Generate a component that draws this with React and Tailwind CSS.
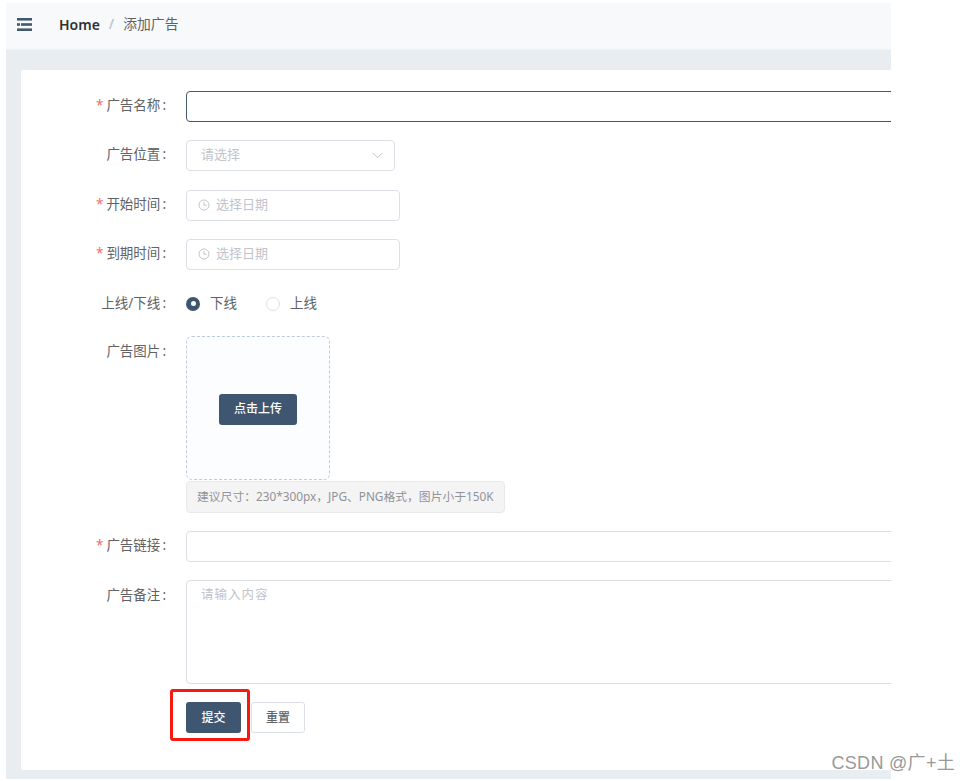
import React from "react";

const cjk = "font-['Noto_Sans','Noto_Sans_CJK_SC',sans-serif]";

function Label({ text, required, flat }) {
  return (
    <div
      className={`w-[146px] shrink-0 h-[31px] flex items-center justify-end pr-[1px] text-[13.5px] text-[#606266] ${flat ? "" : "pb-[2px]"}`}
    >
      {required && <span className="text-[#f56c6c] mr-[3px]">*</span>}
      <span>{text}</span>
      <span className="ml-[2px]">:</span>
    </div>
  );
}

function ClockIcon() {
  return (
    <svg width="12" height="12" viewBox="0 0 12 12" fill="none" stroke="#c0c4cc" strokeWidth="1">
      <circle cx="6" cy="6" r="5" />
      <path d="M6 3v3.2h2.6" />
    </svg>
  );
}

function DateInput() {
  return (
    <div className="w-[214px] h-[31px] border border-[#dcdfe6] rounded flex items-center pl-[11px] pb-[2px] gap-[6px] text-[13px] text-[#c0c4cc]">
      <ClockIcon />
      <span>选择日期</span>
    </div>
  );
}

function App() {
  return (
    <div className={`relative w-[971px] h-[781px] bg-white overflow-hidden ${cjk}`}>
      <div className="ml-[6px] pt-[3px] w-[885px] h-[779px] flex flex-col">
        {/* Top bar */}
        <div className="h-[47px] shrink-0 bg-[#f7f9fb] border-b border-[#eff2f5] flex items-center pl-[11px] pb-[3px]">
          <svg width="15" height="13" viewBox="0 0 15 13" fill="#44586e">
            <rect x="0" y="0" width="15" height="2.6" />
            <rect x="0" y="5.2" width="3" height="2.6" />
            <rect x="4" y="5.2" width="11" height="2.6" />
            <rect x="0" y="10.4" width="15" height="2.6" />
          </svg>
          <span className="ml-[27px] text-[14px] font-semibold text-[#303133]">Home</span>
          <span className="mx-[9px] text-[13.5px] text-[#c0c4cc] font-semibold">/</span>
          <span className="text-[13.8px] text-[#606266]">添加广告</span>
        </div>

        {/* Page body */}
        <div className="flex-1 bg-[#e8edf1] pt-[20px] pl-[15px] pb-[9px] overflow-hidden">
          <div className="h-full bg-white rounded-tl-[3px] rounded-bl-[3px] pt-[21px] overflow-hidden">
            <div className="flex gap-[19px] mb-[18px]">
              <Label text="广告名称" required />
              <div className="w-[760px] h-[31px] shrink-0 border border-[#44586e] rounded" />
            </div>

            <div className="flex gap-[19px] mb-[19px]">
              <Label text="广告位置" />
              <div className="w-[209px] h-[31px] border border-[#dcdfe6] rounded flex items-center justify-between pl-[14px] pr-[11px] pb-[2px] text-[13px] text-[#c0c4cc]">
                <span>请选择</span>
                <svg width="11" height="7" viewBox="0 0 11 7" fill="none" stroke="#c0c4cc" strokeWidth="1" className="mt-[2px]">
                  <path d="M.5.8l5 5 5-5" />
                </svg>
              </div>
            </div>

            <div className="flex gap-[19px] mb-[18px]">
              <Label text="开始时间" required />
              <DateInput />
            </div>

            <div className="flex gap-[19px] mb-[18px]">
              <Label text="到期时间" required />
              <DateInput />
            </div>

            <div className="flex gap-[19px] mb-[17px]">
              <Label text="上线/下线" flat />
              <div className="h-[31px] flex items-center text-[13.5px] text-[#606266]">
                <span className="w-[14px] h-[14px] rounded-full bg-[#3f5670] flex items-center justify-center">
                  <span className="w-[5px] h-[5px] rounded-full bg-white" />
                </span>
                <span className="ml-[10px]">下线</span>
                <span className="ml-[29px] w-[14px] h-[14px] rounded-full border border-[#dcdfe6]" />
                <span className="ml-[10px]">上线</span>
              </div>
            </div>

            <div className="flex gap-[19px] mb-[18px]">
              <Label text="广告图片" flat />
              <div>
                <div className="w-[144px] h-[144px] border border-dashed border-[#c0ccda] rounded-md bg-[#fbfdff] flex items-center justify-center pt-[2px]">
                  <div className="w-[78px] h-[31px] rounded-[3px] bg-[#3f5670] text-white text-[12px] font-medium flex items-center justify-center">
                    点击上传
                  </div>
                </div>
                <div className="mt-[1px] w-[319px] h-[32px] bg-[#f4f4f5] border border-[#e9e9eb] rounded flex items-center pl-[10px] text-[11.8px] text-[#909399] whitespace-nowrap">
                  建议尺寸：230*300px，JPG、PNG格式，图片小于150K
                </div>
              </div>
            </div>

            <div className="flex gap-[19px] mb-[18px]">
              <Label text="广告链接" required />
              <div className="w-[760px] h-[31px] shrink-0 border border-[#dcdfe6] rounded" />
            </div>

            <div className="flex gap-[19px] mb-[18px]">
              <Label text="广告备注" flat />
              <div className="w-[760px] h-[104px] shrink-0 border border-[#dcdfe6] rounded pl-[14px] pt-[5px] text-[12.5px] tracking-[1px] text-[#c0c4cc]">
                请输入内容
              </div>
            </div>

            <div className="flex ml-[165px] gap-[10px]">
              <div className="relative w-[55px] h-[31px] rounded-[3px] bg-[#3f5670] text-white text-[12px] font-medium flex items-center justify-center">
                提交
                {/* red mark on top of the screenshot */}
                <div className="absolute left-[-16px] top-[-13px] w-[80px] h-[52px] border-[3px] border-[#f5190f] rounded-[3px]" />
              </div>
              <div className="w-[54px] h-[31px] rounded-[3px] border border-[#dcdfe6] bg-white text-[#606266] text-[12px] font-medium flex items-center justify-center">
                重置
              </div>
            </div>
          </div>
        </div>
      </div>

      {/* CSDN watermark */}
      <div className="absolute right-[16px] bottom-[7px] text-[18px] leading-[22px] tracking-[0.3px] text-[#999999] font-['Liberation_Sans','Noto_Sans_CJK_SC',sans-serif]">
        CSDN @广+土
      </div>
    </div>
  );
}

export default App;
